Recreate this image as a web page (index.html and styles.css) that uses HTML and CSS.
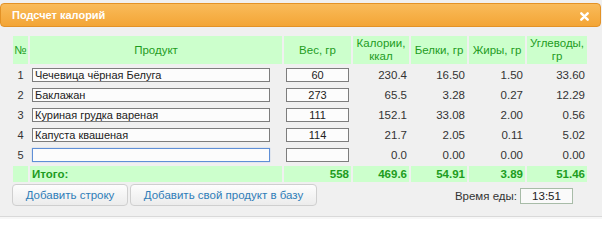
FILE: index.html
```html
<!DOCTYPE html>
<html lang="ru">
<head>
<meta charset="utf-8">
<title>Подсчет калорий</title>
<link rel="stylesheet" href="styles.css">
</head>
<body>
<div class="dialog">
  <div class="titlebar">
    <span class="title">Подсчет калорий</span>
    <span class="close">
      <svg width="9" height="9" viewBox="0 0 9 9"><path d="M1.3 1.3 L7.7 7.7 M7.7 1.3 L1.3 7.7" stroke="#fff" stroke-width="2.4" stroke-linecap="round"/></svg>
    </span>
  </div>
  <div class="content">
    <table class="calc">
      <colgroup>
        <col class="c-num"><col class="c-prod"><col class="c-w"><col class="c-cal"><col class="c-b"><col class="c-f"><col class="c-u">
      </colgroup>
      <thead>
        <tr>
          <th>№</th>
          <th>Продукт</th>
          <th>Вес, гр</th>
          <th>Калории,<br>ккал</th>
          <th>Белки, гр</th>
          <th>Жиры, гр</th>
          <th>Углеводы,<br>гр</th>
        </tr>
      </thead>
      <tbody>
        <tr>
          <td class="num">1</td>
          <td><input class="prod" type="text" value="Чечевица чёрная Белуга"></td>
          <td class="wcell"><input class="weight" type="text" value="60"></td>
          <td class="val">230.4</td><td class="val">16.50</td><td class="val">1.50</td><td class="val">33.60</td>
        </tr>
        <tr>
          <td class="num">2</td>
          <td><input class="prod" type="text" value="Баклажан"></td>
          <td class="wcell"><input class="weight" type="text" value="273"></td>
          <td class="val">65.5</td><td class="val">3.28</td><td class="val">0.27</td><td class="val">12.29</td>
        </tr>
        <tr>
          <td class="num">3</td>
          <td><input class="prod" type="text" value="Куриная грудка вареная"></td>
          <td class="wcell"><input class="weight" type="text" value="111"></td>
          <td class="val">152.1</td><td class="val">33.08</td><td class="val">2.00</td><td class="val">0.56</td>
        </tr>
        <tr>
          <td class="num">4</td>
          <td><input class="prod" type="text" value="Капуста квашеная"></td>
          <td class="wcell"><input class="weight" type="text" value="114"></td>
          <td class="val">21.7</td><td class="val">2.05</td><td class="val">0.11</td><td class="val">5.02</td>
        </tr>
        <tr>
          <td class="num">5</td>
          <td><input class="prod focused" type="text" value=""></td>
          <td class="wcell"><input class="weight" type="text" value=""></td>
          <td class="val">0.0</td><td class="val">0.00</td><td class="val">0.00</td><td class="val">0.00</td>
        </tr>
      </tbody>
      <tfoot>
        <tr>
          <td></td>
          <td class="total-label">Итого:</td>
          <td class="tval">558</td>
          <td class="tval">469.6</td>
          <td class="tval">54.91</td>
          <td class="tval">3.89</td>
          <td class="tval">51.46</td>
        </tr>
      </tfoot>
    </table>
    <div class="actions">
      <button class="btn btn-row" type="button">Добавить строку</button>
      <button class="btn btn-base" type="button">Добавить свой продукт в базу</button>
      <div class="meal-time">
        <span class="meal-label">Время еды:</span>
        <input class="time" type="text" value="13:51">
      </div>
    </div>
  </div>
  <div class="footer"></div>
</div>
</body>
</html>
```
FILE: styles.css
```css
html, body {
  margin: 0;
  padding: 0;
  background: #ffffff;
}
body {
  font-family: "Liberation Sans", Arial, sans-serif;
  font-size: 11px;
  color: #333;
}
.dialog {
  width: 602px;
  height: 219px;
  padding-top: 3px;
  box-sizing: border-box;
  background: #f0f0f0;
  display: flex;
  flex-direction: column;
  overflow: hidden;
}
.titlebar {
  flex: none;
  height: 24px;
  box-sizing: border-box;
  margin: 0 1px 0 0;
  border: 1px solid #e39226;
  border-radius: 4px;
  background: linear-gradient(#f9bb5a, #f3a536);
  display: flex;
  align-items: center;
  justify-content: space-between;
  padding: 0 11px 0 11px;
}
.title {
  color: #fff;
  font-weight: bold;
  font-size: 11px;
}
.close {
  display: flex;
  align-items: center;
  padding-top: 2px;
}
.content {
  flex: 1;
  padding: 7px 0 0 11px;
}
.calc {
  border-collapse: separate;
  border-spacing: 2px;
  table-layout: fixed;
  width: 578px;
}
.c-num { width: 15px; }
.c-prod { width: 252px; }
.c-w { width: 67px; }
.c-cal { width: 56px; }
.c-b { width: 56px; }
.c-f { width: 56px; }
.c-u { width: 60px; }
.calc th {
  background: #ccffcc;
  color: #1e9c1e;
  font-weight: normal;
  height: 28px;
  padding: 0;
  line-height: 13px;
  font-size: 11.5px;
}
.calc tbody td {
  height: 18px;
  padding: 0;
}
.num {
  text-align: center;
  color: #333;
}
.val {
  text-align: right;
  padding-right: 2px !important;
  color: #333;
  font-size: 11.5px;
}
.wcell {
  text-align: center;
}
input {
  font-family: "Liberation Sans", Arial, sans-serif;
  font-size: 11px;
  color: #222;
  box-sizing: border-box;
  height: 14px;
  padding: 0 2px;
  margin: 0;
  border: 1px solid #7d7d7d;
  background: #fcfcfc;
  outline: none;
  vertical-align: middle;
}
.prod {
  width: 238px;
  margin-left: 2px;
  display: block;
}
.prod.focused {
  border-color: #5f8fd6;
  box-shadow: 0 0 1px #9ab8e8;
}
.weight {
  width: 63px;
  text-align: center;
}
.calc tfoot td {
  height: 16px;
  padding: 0;
  background: #ccffcc;
  color: #1e9c1e;
  font-weight: bold;
  font-size: 11.5px;
}
.total-label {
  padding-left: 2px !important;
}
.tval {
  text-align: right;
  padding-right: 2px !important;
}
.actions {
  display: flex;
  align-items: center;
  margin: 0 0 0 1px;
  height: 22px;
}
.btn {
  height: 22px;
  border: 1px solid #cfcfcf;
  border-radius: 4px;
  background: linear-gradient(#fdfdfd, #ececec);
  color: #2f7db8;
  font-family: "Liberation Sans", Arial, sans-serif;
  font-size: 11.5px;
  padding: 0;
  margin-right: 2px;
}
.btn-row { width: 116px; }
.btn-base { width: 187px; }
.meal-time {
  margin-left: auto;
  margin-right: 29px;
  display: flex;
  align-items: center;
  gap: 3px;
  padding-top: 1px;
}
.meal-label {
  color: #333;
  font-size: 11.5px;
}
.time {
  width: 53px;
  height: 16px;
  text-align: center;
  font-size: 11.5px;
  border-color: #a8bca8;
  background: #fafafa;
}
.footer {
  flex: none;
  height: 2px;
  border-top: 1px solid #d9d9d9;
  background: #f7f7f7;
}
```
